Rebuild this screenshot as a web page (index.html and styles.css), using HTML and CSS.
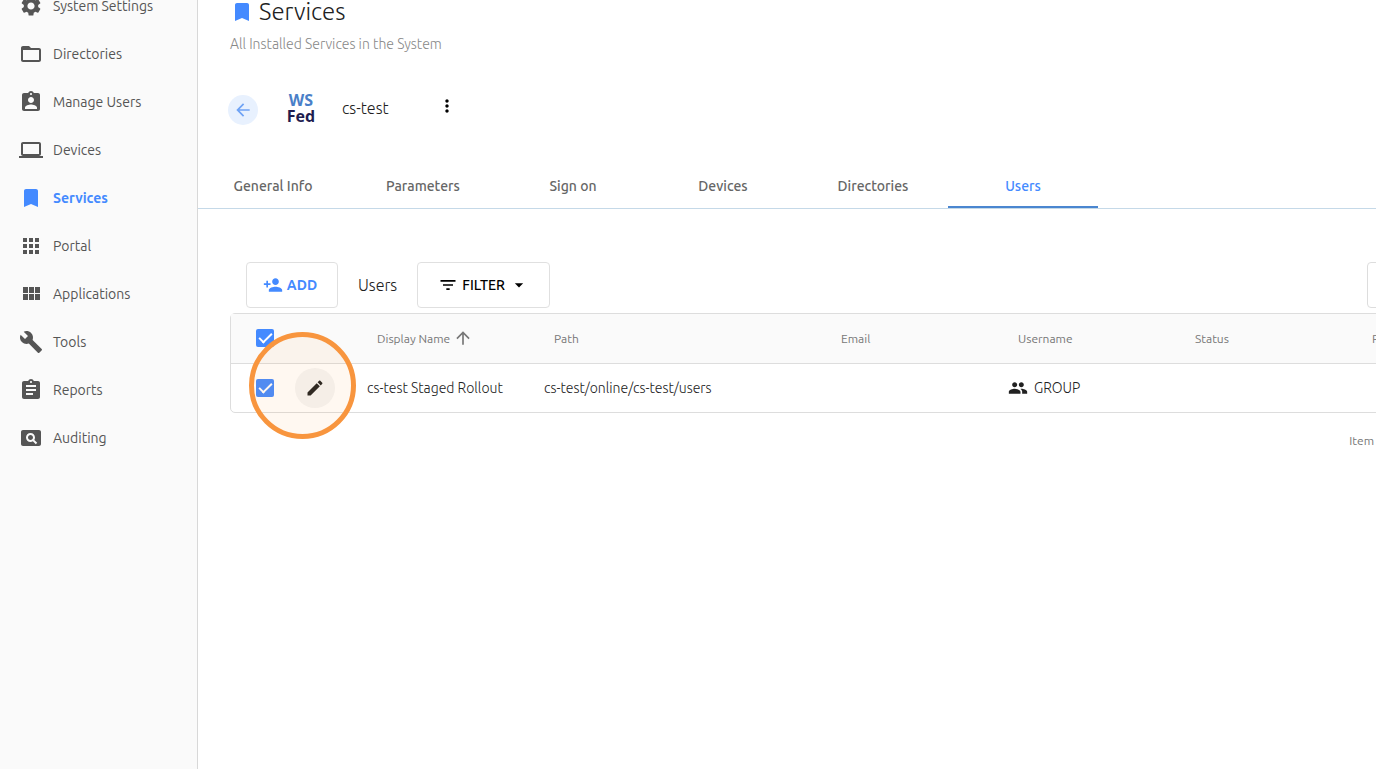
FILE: index.html
```html
<!DOCTYPE html>
<html lang="en">
<head>
    <meta charset="UTF-8">
    <meta name="viewport" content="width=device-width, initial-scale=1.0">
    <title>Services</title>
    <link rel="stylesheet" href="styles.css">
</head>
<body>
    <nav class="sidebar">
        <a class="nav-item" href="#">
            <svg class="icon" viewBox="0 0 24 24"><path d="M19.14 12.94c.04-.3.06-.61.06-.94s-.02-.64-.07-.94l2.03-1.58c.18-.14.23-.41.12-.61l-1.92-3.32c-.12-.22-.37-.29-.59-.22l-2.39.96c-.5-.38-1.03-.7-1.62-.94l-.36-2.54c-.04-.24-.24-.41-.48-.41h-3.84c-.24 0-.43.17-.47.41l-.36 2.54c-.59.24-1.13.57-1.62.94l-2.39-.96c-.22-.08-.47 0-.59.22L2.74 8.87c-.12.21-.08.47.12.61l2.03 1.58c-.05.3-.09.63-.09.94s.02.64.07.94l-2.03 1.58c-.18.14-.23.41-.12.61l1.92 3.32c.12.22.37.29.59.22l2.39-.96c.5.38 1.03.7 1.62.94l.36 2.54c.05.24.24.41.48.41h3.84c.24 0 .44-.17.47-.41l.36-2.54c.59-.24 1.13-.56 1.62-.94l2.39.96c.22.08.47 0 .59-.22l1.92-3.32c.12-.22.07-.47-.12-.61l-2.01-1.58zM12 15.6c-1.98 0-3.6-1.62-3.6-3.6s1.62-3.6 3.6-3.6 3.6 1.62 3.6 3.6-1.62 3.6-3.6 3.6z"/></svg>
            System Settings
        </a>
        <a class="nav-item" href="#">
            <svg class="icon" viewBox="0 0 24 24"><path d="M20 6h-8l-2-2H4c-1.1 0-2 .9-2 2v12c0 1.100.9 2 2 2h16c1.100 0 2-.9 2-2V8c0-1.100-.9-2-2-2zm0 12H4V8h16v10z"/></svg>
            Directories
        </a>
        <a class="nav-item" href="#">
            <svg class="icon" viewBox="0 0 24 24"><path d="M19 3h-4.180C14.400 1.840 13.300 1 12 1s-2.400.84-2.820 2H5c-1.100 0-2 .9-2 2v14c0 1.100.9 2 2 2h14c1.100 0 2-.9 2-2V5c0-1.100-.9-2-2-2zm-7 0c.55 0 1 .45 1 1s-.45 1-1 1-1-.45-1-1 .45-1 1-1zm0 4c1.660 0 3 1.340 3 3s-1.340 3-3 3-3-1.340-3-3 1.340-3 3-3zm6 12H6v-1.400c0-2 4-3.100 6-3.100s6 1.100 6 3.100V19z"/></svg>
            Manage Users
        </a>
        <a class="nav-item" href="#">
            <svg class="icon" viewBox="0 0 24 24"><path d="M20 18c1.100 0 2-.9 2-2V6c0-1.100-.9-2-2-2H4c-1.100 0-2 .9-2 2v10c0 1.100.9 2 2 2H0v2h24v-2h-4zM4 6h16v10H4V6z"/></svg>
            Devices
        </a>
        <a class="nav-item active" href="#">
            <svg class="icon" viewBox="0 0 24 24"><path d="M17 3H7c-1.100 0-2 .9-2 2v16l7-3 7 3V5c0-1.100-.9-2-2-2z"/></svg>
            Services
        </a>
        <a class="nav-item" href="#">
            <svg class="icon" viewBox="0 0 24 24"><path d="M4 8h4V4H4v4zm6 12h4v-4h-4v4zm-6 0h4v-4H4v4zm0-6h4v-4H4v4zm6 0h4v-4h-4v4zm6-10v4h4V4h-4zm-6 4h4V4h-4v4zm6 6h4v-4h-4v4zm0 6h4v-4h-4v4z"/></svg>
            Portal
        </a>
        <a class="nav-item" href="#">
            <svg class="icon" viewBox="0 0 24 24"><path d="M4 11h5V5H4v6zm0 7h5v-6H4v6zm6 0h5v-6h-5v6zm6 0h5v-6h-5v6zm-6-7h5V5h-5v6zm6-6v6h5V5h-5z"/></svg>
            Applications
        </a>
        <a class="nav-item" href="#">
            <svg class="icon" viewBox="0 0 24 24"><path d="M22.700 19l-9.100-9.100c.9-2.300.4-5-1.500-6.900-2-2-5-2.400-7.400-1.300L9 6 6 9 1.600 4.700C.4 7.100.9 10.100 2.900 12.100c1.900 1.900 4.600 2.400 6.900 1.500l9.100 9.100c.4.4 1 .4 1.400 0l2.300-2.300c.5-.4.5-1.100.1-1.400z"/></svg>
            Tools
        </a>
        <a class="nav-item" href="#">
            <svg class="icon" viewBox="0 0 24 24"><path d="M19 3h-4.180C14.400 1.840 13.300 1 12 1s-2.400.84-2.820 2H5c-1.100 0-2 .9-2 2v14c0 1.100.9 2 2 2h14c1.100 0 2-.9 2-2V5c0-1.100-.9-2-2-2zm-7 0c.55 0 1 .45 1 1s-.45 1-1 1-1-.45-1-1 .45-1 1-1zm2 14H7v-2h7v2zm3-4H7v-2h10v2zm0-4H7V7h10v2z"/></svg>
            Reports
        </a>
        <a class="nav-item" href="#">
            <svg class="icon" viewBox="0 0 24 24"><path d="M11.500 9C10.120 9 9 10.120 9 11.500s1.120 2.500 2.500 2.500 2.500-1.120 2.500-2.500S12.880 9 11.500 9zM20 4H4c-1.100 0-2 .9-2 2v12c0 1.100.9 2 2 2h16c1.100 0 2-.9 2-2V6c0-1.100-.9-2-2-2zm-3.210 14.210l-2.910-2.910c-.69.440-1.510.700-2.390.700C9.010 16 7 13.990 7 11.500S9.010 7 11.500 7 16 9.010 16 11.500c0 .88-.26 1.690-.7 2.390l2.910 2.900-1.420 1.420z"/></svg>
            Auditing
        </a>
    </nav>
    <main class="main">
        <header class="page-header">
            <h1>
                <svg class="icon blue" viewBox="0 0 24 24"><path d="M17 3H7c-1.100 0-2 .9-2 2v16l7-3 7 3V5c0-1.100-.9-2-2-2z"/></svg>
                Services
            </h1>
            <p>All Installed Services in the System</p>
        </header>
        <div class="service">
            <button class="back" type="button" aria-label="Back">
                <svg class="icon-sm" viewBox="0 0 24 24"><path d="M20 11H7.830l5.590-5.590L12 4l-8 8 8 8 1.410-1.410L7.830 13H20v-2z"/></svg>
            </button>
            <div class="logo"><span>WS</span><span class="dark">Fed</span></div>
            <h2>cs-test</h2>
            <button class="more" type="button" aria-label="More">
                <svg class="icon-sm" viewBox="0 0 24 24"><path d="M12 8c1.100 0 2-.9 2-2s-.9-2-2-2-2 .9-2 2 .9 2 2 2zm0 2c-1.100 0-2 .9-2 2s.9 2 2 2 2-.9 2-2-.9-2-2-2zm0 6c-1.100 0-2 .9-2 2s.9 2 2 2 2-.9 2-2-.9-2-2-2z"/></svg>
            </button>
        </div>
        <div class="tabs">
            <a class="tab" href="#">General Info</a>
            <a class="tab" href="#">Parameters</a>
            <a class="tab" href="#">Sign on</a>
            <a class="tab" href="#">Devices</a>
            <a class="tab" href="#">Directories</a>
            <a class="tab active" href="#">Users</a>
        </div>
        <section class="users">
            <div class="toolbar">
                <button class="btn add" type="button">
                    <svg class="icon-sm" viewBox="0 0 24 24"><path d="M15 12c2.210 0 4-1.790 4-4s-1.790-4-4-4-4 1.790-4 4 1.790 4 4 4zm-9-2V7H4v3H1v2h3v3h2v-3h3v-2H6zm9 4c-2.670 0-8 1.340-8 4v2h16v-2c0-2.660-5.330-4-8-4z"/></svg>
                    ADD
                </button>
                <h3>Users</h3>
                <button class="btn filter" type="button">
                    <svg class="icon-sm" viewBox="0 0 24 24"><path d="M10 18h4v-2h-4v2zM3 6v2h18V6H3zm3 7h12v-2H6v2z"/></svg>
                    FILTER
                    <svg class="icon-sm" viewBox="0 0 24 24"><path d="M7 10l5 5 5-5z"/></svg>
                </button>
                <input class="search" type="text" aria-label="Search">
            </div>
            <div class="table-box">
                <table>
                    <thead>
                        <tr>
                            <th class="col-check"><input type="checkbox" aria-label="Select all" checked></th>
                            <th class="col-edit"></th>
                            <th class="col">
                                <span class="sorted">
                                    Display Name
                                    <svg class="icon-sm" viewBox="0 0 24 24"><path d="M4 12l1.410 1.410L11 7.830V20h2V7.830l5.580 5.590L20 12l-8-8-8 8z"/></svg>
                                </span>
                            </th>
                            <th class="col-path">Path</th>
                            <th class="col">Email</th>
                            <th class="col">Username</th>
                            <th class="col">Status</th>
                            <th>P</th>
                        </tr>
                    </thead>
                    <tbody>
                        <tr>
                            <td class="col-check"><input type="checkbox" aria-label="Select cs-test Staged Rollout" checked></td>
                            <td class="col-edit">
                                <button class="edit" type="button" aria-label="Edit">
                                    <svg class="icon-sm" viewBox="0 0 24 24"><path d="M3 17.250V21h3.750L17.810 9.940l-3.750-3.750L3 17.250zM20.710 7.040c.39-.39.39-1.020 0-1.410l-2.340-2.340c-.39-.39-1.020-.39-1.410 0l-1.830 1.830 3.750 3.750 1.830-1.830z"/></svg>
                                </button>
                                <span class="marker"></span>
                            </td>
                            <td>cs-test Staged Rollout</td>
                            <td>cs-test/online/cs-test/users</td>
                            <td></td>
                            <td>
                                <span class="group">
                                    <svg class="icon-sm" viewBox="0 0 24 24"><path d="M16 11c1.660 0 2.990-1.340 2.990-3S17.660 5 16 5c-1.660 0-3 1.340-3 3s1.340 3 3 3zm-8 0c1.660 0 2.990-1.340 2.990-3S9.660 5 8 5C6.340 5 5 6.340 5 8s1.340 3 3 3zm0 2c-2.330 0-7 1.170-7 3.500V19h14v-2.500c0-2.330-4.670-3.500-7-3.500zm8 0c-.29 0-.62.020-.97.050 1.160.84 1.970 1.970 1.970 3.450V19h6v-2.500c0-2.330-4.670-3.500-7-3.500z"/></svg>
                                    GROUP
                                </span>
                            </td>
                            <td></td>
                            <td></td>
                        </tr>
                    </tbody>
                </table>
            </div>
            <div class="pager">Item</div>
        </section>
    </main>
</body>
</html>
```
FILE: styles.css
```css
* {
    box-sizing: border-box;
}
body {
    font-family: Ubuntu, "Noto Sans", sans-serif;
    font-size: 14px;
    margin: 0;
    display: flex;
    height: 100vh;
    overflow: hidden;
    color: #212121;
    background-color: #fff;
}
button, input {
    font-family: inherit;
}
a {
    text-decoration: none;
}
h1, h2, h3, p {
    margin: 0;
    font-weight: 300;
}
svg {
    fill: currentColor;
    flex-shrink: 0;
}
.icon {
    width: 24px;
    height: 24px;
}
.icon-sm {
    width: 20px;
    height: 20px;
}
.blue {
    color: #448aff;
}

/* sidebar */
.sidebar {
    flex: 0 0 198px;
    background: #fafafa;
    border-right: 1px solid #d8d8d8;
}
.nav-item {
    display: flex;
    align-items: center;
    gap: 10px;
    height: 48px;
    padding-left: 19px;
    color: #555;
}
.nav-item:first-child {
    margin-top: -18px;
}
.nav-item.active {
    color: #448aff;
    font-weight: 700;
}

/* page header */
.main {
    flex: 1;
    min-width: 0;
    overflow: hidden;
}
.page-header {
    padding-left: 32px;
}
.page-header h1 {
    display: flex;
    align-items: center;
    gap: 5px;
    font-size: 24px;
    line-height: 24px;
}
.page-header p {
    margin-top: 10px;
    line-height: 20px;
    color: #888;
}
.service {
    display: flex;
    align-items: center;
    height: 48px;
    margin: 30px 0 0 30px;
}
.back {
    width: 30px;
    height: 30px;
    margin-top: 4px;
    padding: 5px;
    border: none;
    border-radius: 50%;
    background: #e8f1fe;
    color: #6fa3f5;
    cursor: pointer;
}
.logo {
    display: flex;
    flex-direction: column;
    align-items: center;
    width: 30px;
    margin-left: 28px;
    font-family: "Open Sans", sans-serif;
    font-size: 16px;
    font-weight: 700;
    line-height: 16px;
    color: #4a7fc8;
}
.logo .dark {
    color: #1f1d4f;
}
.service h2 {
    margin-left: 26px;
    font-size: 16px;
}
.more {
    margin: 0 0 4px 48px;
    padding: 0;
    height: 20px;
    border: none;
    background: none;
    cursor: pointer;
}

/* tabs */
.tabs {
    display: flex;
    margin-top: 32px;
    border-bottom: 1px solid #c5d9e8;
}
.tab {
    width: 150px;
    height: 44px;
    line-height: 44px;
    text-align: center;
    font-weight: 500;
    color: #666;
}
.tab.active {
    color: #448aff;
    border-bottom: 2px solid #4a86d0;
}

/* users table */
.users {
    width: 100%;
    min-width: 1320px;
    padding: 53px 32px 0;
}
.toolbar {
    display: flex;
    align-items: center;
    padding-left: 16px;
}
.btn {
    display: flex;
    align-items: center;
    justify-content: center;
    height: 46px;
    border: 1px solid #e0e0e0;
    border-radius: 4px;
    background: #fff;
    font-size: 14px;
    font-weight: 500;
    gap: 4px;
    cursor: pointer;
}
.add {
    width: 92px;
    padding: 0 8px 0 4px;
    color: #448aff;
    font-weight: 600;
}
.filter {
    width: 133px;
    color: #000;
}
.toolbar h3 {
    margin: 0 20px;
    font-size: 16px;
}
.search {
    width: 119px;
    height: 46px;
    margin-left: auto;
    border: 1px solid #ddd;
    border-radius: 4px;
}
.table-box {
    margin-top: 5px;
    border: 1px solid #ddd;
    border-radius: 5px;
}
table {
    width: 100%;
    table-layout: fixed;
    border-collapse: collapse;
}
th, td {
    height: 49px;
    padding: 0;
    text-align: left;
    white-space: nowrap;
}
th {
    padding-left: 10px;
    background: #fafafa;
    border-bottom: 1px solid #ddd;
    font-size: 12px;
    font-weight: 400;
    color: #777;
}
td {
    font-weight: 300;
}
.col-check {
    width: 64px;
    padding-left: 25px;
}
.col-edit {
    width: 72px;
    position: relative;
}
.col {
    width: 177px;
}
.col-path {
    width: 287px;
}
.sorted {
    display: flex;
    align-items: center;
    gap: 3px;
}
input[type="checkbox"] {
    appearance: none;
    display: block;
    width: 18px;
    height: 18px;
    margin: 0;
    padding: 4px 3px;
    border-radius: 2px;
    background: #448aff;
}
input[type="checkbox"]:checked::after {
    content: "";
    box-sizing: border-box;
    display: block;
    width: 13px;
    height: 7px;
    border-left: 2px solid #fff;
    border-bottom: 2px solid #fff;
    transform: rotate(-45deg);
}
.edit {
    display: flex;
    align-items: center;
    justify-content: center;
    width: 40px;
    height: 40px;
    padding: 0;
    border: none;
    border-radius: 50%;
    background: #f5f5f5;
    color: #212121;
    cursor: pointer;
}
.marker {
    position: absolute;
    top: -32px;
    left: -46px;
    width: 107px;
    height: 107px;
    border: 5px solid #f8953e;
    border-radius: 50%;
    background: rgba(248, 149, 62, 0.07);
    pointer-events: none;
}
.group {
    display: flex;
    align-items: center;
    gap: 6px;
}
.pager {
    display: flex;
    justify-content: flex-end;
    margin-top: 21px;
    padding-right: 112px;
    font-size: 12px;
    color: #777;
}
```
